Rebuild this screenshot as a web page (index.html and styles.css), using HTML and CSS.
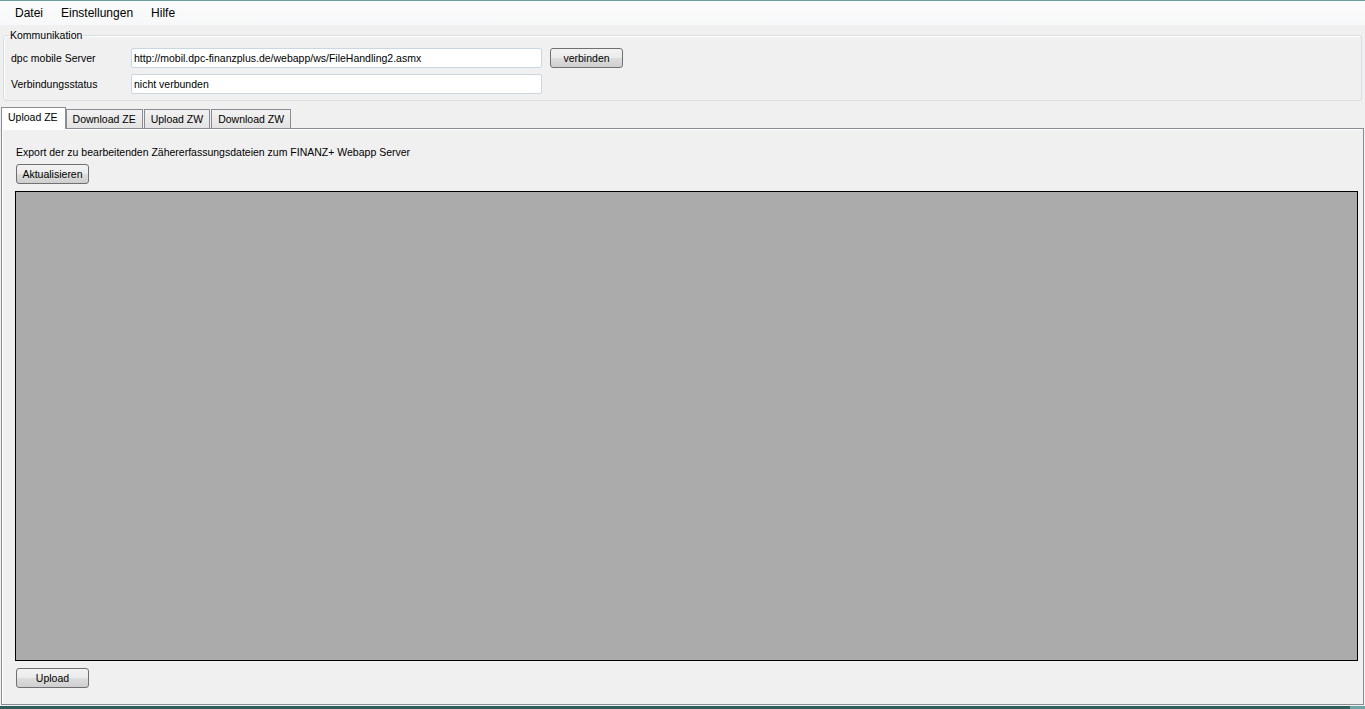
FILE: index.html
```html
<!DOCTYPE html>
<html lang="de">

<head>
    <meta charset="UTF-8">
    <title>dpc mobile</title>
    <link rel="stylesheet" href="styles.css">
</head>

<body>
    <div class="window">
        <div class="menubar">
            <span class="menu-item">Datei</span>
            <span class="menu-item">Einstellungen</span>
            <span class="menu-item">Hilfe</span>
        </div>

        <fieldset class="group">
            <legend>Kommunikation</legend>
            <div class="row">
                <label class="row-label">dpc mobile Server</label>
                <input class="field" type="text" value="http://mobil.dpc-finanzplus.de/webapp/ws/FileHandling2.asmx">
                <button class="btn btn-connect">verbinden</button>
            </div>
            <div class="row">
                <label class="row-label">Verbindungsstatus</label>
                <input class="field" type="text" value="nicht verbunden">
            </div>
        </fieldset>

        <div class="tabs">
            <span class="tab active">Upload ZE</span>
            <span class="tab">Download ZE</span>
            <span class="tab">Upload ZW</span>
            <span class="tab">Download ZW</span>
        </div>

        <div class="panel">
            <p class="info">Export der zu bearbeitenden Zähererfassungsdateien zum FINANZ+ Webapp Server</p>
            <button class="btn">Aktualisieren</button>
            <div class="grid-area"></div>
            <button class="btn">Upload</button>
        </div>

        <div class="bottom-line"></div>
    </div>
</body>

</html>
```

FILE: styles.css
```css
body {
    margin: 0;
    font-family: "Liberation Sans", Arial, sans-serif;
    font-size: 10.5px;
    color: #000;
    background-color: #f0f0f0;
}

.window {
    height: 709px;
    display: flex;
    flex-direction: column;
    border-top: 1px solid #6c9c9c;
    box-sizing: border-box;
    overflow: hidden;
}

.menubar {
    height: 24px;
    display: flex;
    align-items: center;
    padding-left: 8px;
    background: linear-gradient(to bottom, #fbfbfb, #f7f8f9);
    font-size: 12px;
}

.menu-item {
    padding: 0 7px;
    margin-right: 4px;
}

.group {
    margin: 4px 3px 0 3px;
    padding: 7px 0 0 7px;
    border: 1px solid #d5dfe5;
    border-radius: 3px;
    box-shadow: inset 1px 1px 0 #fff;
}

.group legend {
    padding: 0 1px;
    margin-left: -2px;
}

.row {
    display: flex;
    align-items: center;
    height: 20px;
    margin-bottom: 6px;
}

.row-label {
    width: 120px;
}

.field {
    width: 411px;
    height: 20px;
    box-sizing: border-box;
    border: 1px solid #c9d7e4;
    border-radius: 2px;
    padding: 0 2px;
    font-family: inherit;
    font-size: 10.5px;
    background: #fff;
    color: #000;
}

.btn {
    width: 73px;
    height: 20px;
    padding: 0;
    margin-left: 1px;
    font-family: inherit;
    font-size: 10.5px;
    color: #000;
    border: 1px solid #707070;
    border-radius: 3px;
    background: linear-gradient(to bottom, #f2f2f2 0%, #ebebeb 50%, #dddddd 51%, #cfcfcf 100%);
}

.btn-connect {
    margin-left: 8px;
}

.tabs {
    display: flex;
    align-items: flex-end;
    height: 21px;
    margin-top: 6px;
    padding-left: 1px;
}

.tab {
    height: 18px;
    line-height: 18px;
    padding: 0 6px;
    border: 1px solid #898c95;
    border-bottom: none;
    margin-left: 1px;
    background: linear-gradient(to bottom, #f2f2f2, #e3e3e3);
}

.tab:first-child {
    margin-left: 0;
}

.tab.active {
    position: relative;
    height: 21px;
    line-height: 19px;
    padding: 0 7px 0 6px;
    background: #fff;
    margin-bottom: -1px;
    z-index: 1;
}

.tab.active + .tab {
    margin-left: 0;
}

.panel {
    margin: 0 1px 0 1px;
    height: 577px;
    box-sizing: border-box;
    border: 1px solid #898c95;
    box-shadow: inset 1px 1px 0 #fff;
    display: flex;
    flex-direction: column;
    align-items: flex-start;
    padding: 0 5px 0 13px;
}

.info {
    margin: 17px 0 4px 1px;
    height: 14px;
}

.grid-area {
    align-self: stretch;
    height: 470px;
    box-sizing: border-box;
    margin: 7px 0 7px 0;
    background: #ababab;
    border: 1px solid #000;
}

.bottom-line {
    margin-top: auto;
    height: 3px;
    background: linear-gradient(to right, #2f5f5a 98.9%, #6fa5a5 98.9%);
}
```
